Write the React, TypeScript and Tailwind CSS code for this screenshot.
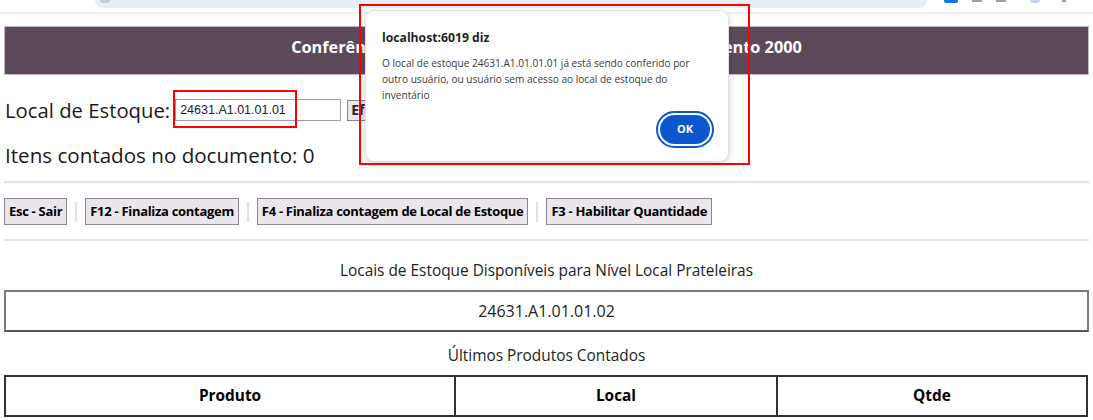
import React from "react";

function ActionButton({ children }: { children: React.ReactNode }) {
  return (
    <button className="h-[27px] px-[4px] bg-[#ebe6ec] border border-[#8a8590] text-[13px] tracking-[-0.3px] font-bold text-black leading-none">
      {children}
    </button>
  );
}

function Sep() {
  return <div className="w-[2px] h-[20px] bg-[#e4e1e6] mx-[8px]" />;
}

export default function App() {
  return (
    <div className="relative w-[1093px] h-[420px] overflow-hidden bg-white font-['Open_Sans',sans-serif] text-[#222]">
      {/* browser chrome remnants */}
      <div className="h-[14px] border-b-2 border-[#eceef2] flex items-start">
        <div className="ml-[95px] w-[832px] h-[8px] bg-[#e9eef6] rounded-b-[8px] pl-[5px]">
          <div className="w-[10px] h-[3px] rounded-b-full bg-[#c9ced6]" />
        </div>
        <div className="ml-[17px] flex items-start gap-[14px]">
          <div className="w-[14px] h-[3px] bg-[#1a73e8] rounded-b-[2px]" />
          <div className="w-[10px] h-[2px] bg-[#9aa0a6]" />
          <div className="w-[10px] h-[2px] bg-[#9aa0a6]" />
          <div className="ml-[10px] w-[10px] h-[3px] bg-[#c6d4f0] rounded-b-full" />
          <div className="ml-[8px] w-[4px] h-[2px] bg-[#9aa0a6]" />
        </div>
      </div>

      <div className="px-[4px] pt-[12px]">
        {/* header */}
        <div className="h-[49px] bg-[#5c4a5a] border border-[#c4b6c4] flex justify-center pt-[10px]">
          <span className="text-white font-bold text-[16.3px] leading-[20px]">
            Conferência de Inventário - Local de Estoque - Documento 2000
          </span>
        </div>

        {/* local de estoque row */}
        <div className="mt-[24px] flex items-center h-[22px] pl-[1px]">
          <span className="text-[20.3px] leading-[22px] text-[#1a1a1a]">Local de Estoque:</span>
          <input
            readOnly
            value="24631.A1.01.01.01"
            className="ml-[5px] w-[166px] h-[22px] border border-[#a89aa8] px-[4px] text-[12.5px] font-['Liberation_Sans',sans-serif] text-[#222] outline-none"
          />
          <button className="ml-[6px] h-[21px] px-[3px] bg-[#ebe6ec] border border-[#8a8590] text-[14px] font-bold leading-none">
            Efetuar
          </button>
        </div>

        <div className="mt-[20px] pl-[1px] text-[20.6px] leading-[28px] text-[#1a1a1a]">
          Itens contados no documento: 0
        </div>

        <div className="mt-[12px] h-[2px] bg-[#e4e1e6]" />

        <div className="mt-[15px] flex items-center">
          <ActionButton>Esc - Sair</ActionButton>
          <Sep />
          <ActionButton>F12 - Finaliza contagem</ActionButton>
          <Sep />
          <ActionButton>F4 - Finaliza contagem de Local de Estoque</ActionButton>
          <Sep />
          <ActionButton>F3 - Habilitar Quantidade</ActionButton>
        </div>

        <div className="mt-[14px] h-[2px] bg-[#e4e1e6]" />

        <div className="mt-[20px] text-center text-[15.4px] leading-[20px] text-[#222]">
          Locais de Estoque Disponíveis para Nível Local Prateleiras
        </div>

        <div className="mt-[9px] h-[42px] border-2 border-[#7a7a7a] border-b-[#555] flex items-center justify-center text-[16px] text-[#222]">
          24631.A1.01.01.02
        </div>

        <div className="mt-[14px] text-center text-[15.4px] leading-[20px] text-[#222]">
          Últimos Produtos Contados
        </div>

        <table className="mt-[9px] w-[1084px] border-collapse">
          <thead>
            <tr className="h-[40px]">
              <th className="w-[450px] border-2 border-[#333] text-[15.4px] font-bold text-black">Produto</th>
              <th className="w-[322px] border-2 border-[#333] text-[15.4px] font-bold text-black">Local</th>
              <th className="border-2 border-[#333] text-[15.4px] font-bold text-black">Qtde</th>
            </tr>
          </thead>
        </table>
      </div>

      {/* red annotation around input */}
      <div className="absolute left-[173px] top-[90px] w-[124px] h-[38px] border-2 border-[#ff0000]" />

      {/* alert dialog */}
      <div className="absolute left-[365px] top-[10px] w-[364px] h-[152px] bg-white rounded-[9px] border border-[#e2e2e2] shadow-[0_2px_6px_rgba(0,0,0,0.18)] px-[16px] pt-[18px] flex flex-col">
        <div className="text-[12.2px] font-bold text-[#1f1f1f] leading-[18px]">localhost:6019 diz</div>
        <div className="mt-[8px] text-[10.1px] leading-[16px] text-[#3a3a3a] pr-[10px]">
          O local de estoque 24631.A1.01.01.01 já está sendo conferido por outro usuário, ou usuário sem acesso ao local de estoque do inventário
        </div>
        <div className="mt-[8px] self-end mr-[-2px] w-[58px] h-[37px] rounded-full border-2 border-[#0b57d0] p-[2px]">
          <div className="w-full h-full rounded-full bg-[#0b57d0] flex items-center justify-center text-white text-[11px] font-bold">
            OK
          </div>
        </div>
      </div>

      {/* red annotation around dialog */}
      <div className="absolute left-[359px] top-[4px] w-[391px] h-[161px] border-2 border-[#ff0000]" />
    </div>
  );
}
